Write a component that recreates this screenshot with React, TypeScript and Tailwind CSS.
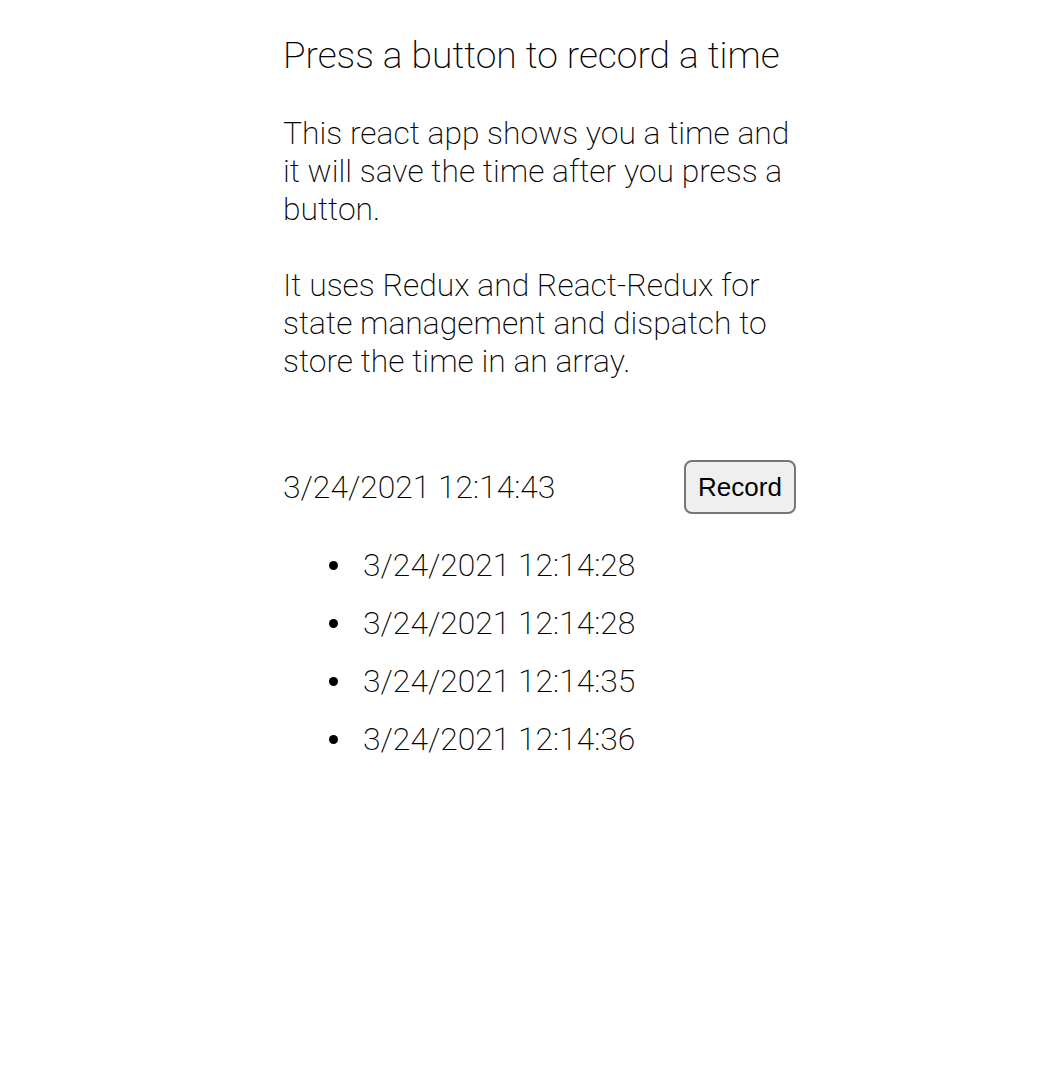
export default function App() {
  const items = [
    "3/24/2021 12:14:28",
    "3/24/2021 12:14:28",
    "3/24/2021 12:14:35",
    "3/24/2021 12:14:36",
  ];
  return (
    <div className="min-h-[1076px] bg-white text-black font-[Roboto,sans-serif] font-extralight">
      <div className="ml-[283px] w-[513px] pt-[33px]">
        <h1 className="text-[37.2px] leading-[44px] font-extralight">Press a button to record a time</h1>
        <p className="mt-[37px] text-[31.85px] leading-[38px]">
          This react app shows you a time and it will save the time after you press a button.
        </p>
        <p className="mt-[38px] text-[31.85px] leading-[38px]">
          It uses Redux and React-Redux for state management and dispatch to store the time in an array.
        </p>
        <div className="mt-[80px] flex items-center justify-between">
          <span className="text-[31.85px] leading-[38px]">3/24/2021 12:14:43</span>
          <button className="h-[54px] w-[112px] rounded-[8px] border-2 border-[#767676] bg-[#efefef] font-['Liberation_Sans',Arial,sans-serif] text-[26px] font-normal text-black">
            Record
          </button>
        </div>
        <ul className="mt-[32px] flex flex-col gap-[20px] pl-[46px]">
          {items.map((t, i) => (
            <li key={i} className="flex items-center gap-[25px] text-[31.85px] leading-[38px]">
              <span className="h-[9px] w-[9px] shrink-0 rounded-full bg-black" />
              <span>{t}</span>
            </li>
          ))}
        </ul>
      </div>
    </div>
  );
}
